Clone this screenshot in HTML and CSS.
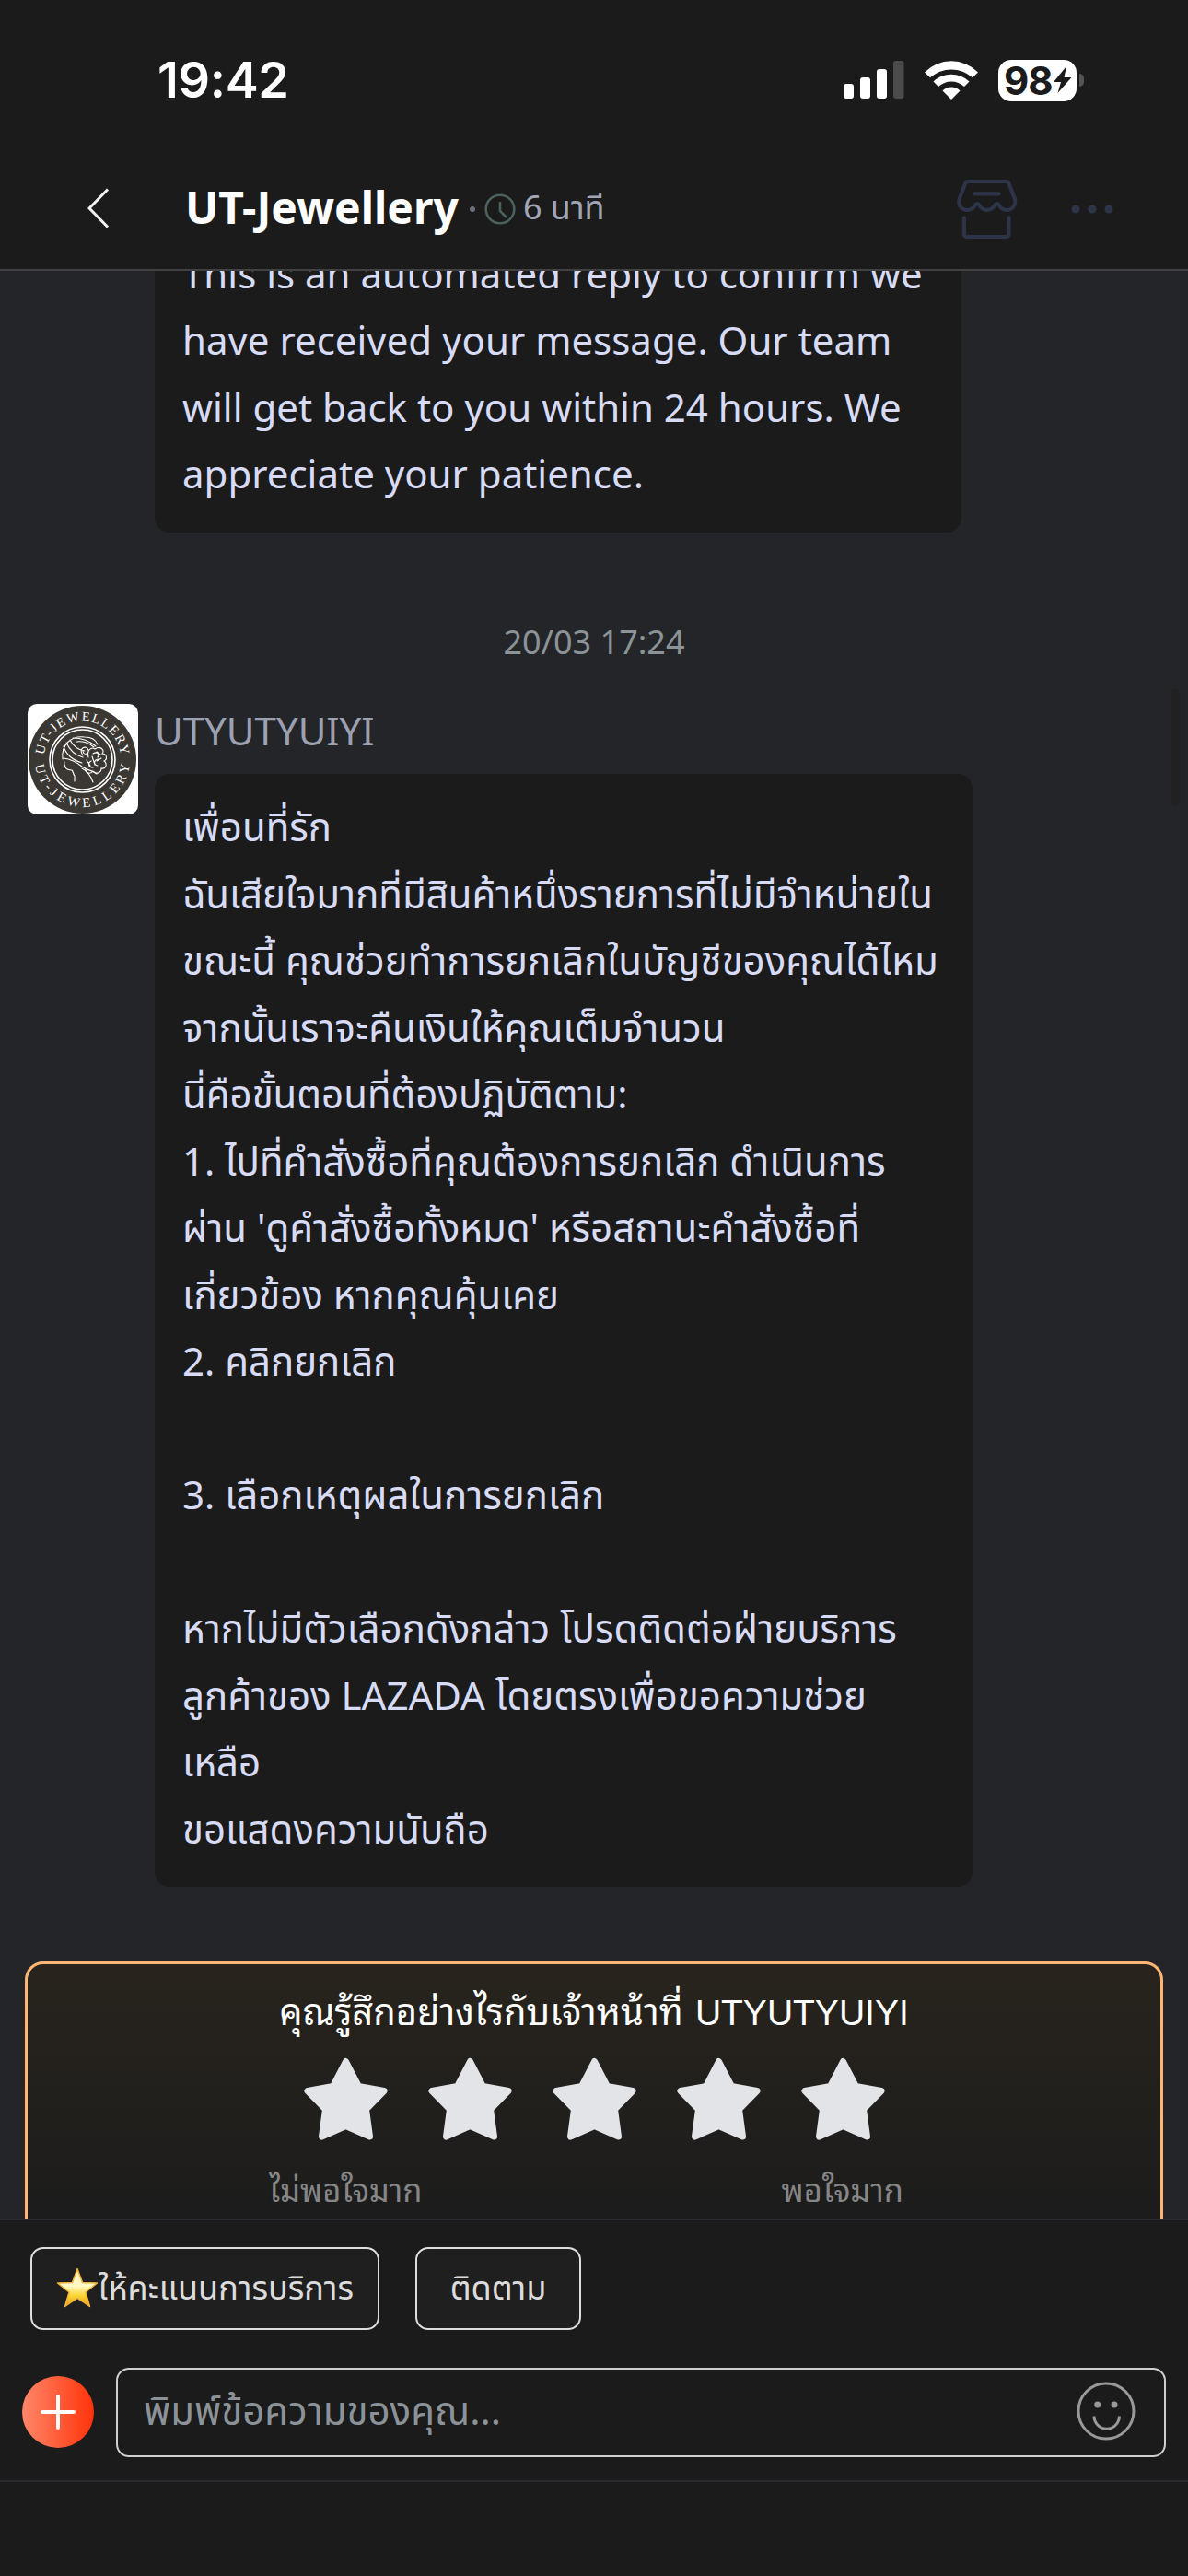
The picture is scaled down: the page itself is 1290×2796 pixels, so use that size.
FILE: index.html
```
<!DOCTYPE html>
<html lang="th">
<head>
<meta charset="utf-8">
<title>UT-Jewellery</title>
<link rel="stylesheet" href="styles.css">
</head>
<body>
<div class="phone">
  <div class="status-bar">
    <span class="clock">19:42</span>
    <div class="status-icons">
      <svg class="signal" viewBox="0 0 66 42"><g fill="#fff"><rect x="0" y="25" width="11" height="16" rx="3"/><rect x="18" y="18" width="11" height="23" rx="3"/><rect x="36" y="9" width="11" height="32" rx="3"/></g><rect x="54" y="0" width="11.5" height="41" rx="3" fill="#4b4b4b"/></svg>
      <svg class="wifi" viewBox="0 0 58 42" fill="#fff"><path d="M0 12.6A40.5 40.5 0 0 1 58 12.6L52 18.2A34.7 34.7 0 0 0 6 18.2Z"/><path d="M9.5 22.4A28.5 28.5 0 0 1 48.5 22.4L43 28A20.5 20.5 0 0 0 15 28Z"/><path d="M19.5 32.5A13.5 13.5 0 0 1 38.5 32.5L29 42Z"/></svg>
      <div class="battery">
        <span class="level">98</span>
        <svg class="bolt" viewBox="0 0 20 30"><path d="M14 0 0 17H8L4.5 29 19.5 12H11.5Z" fill="#1b1b1b"/></svg>
      </div>
      <div class="battery-tip"></div>
    </div>
  </div>

  <header class="header">
    <svg class="back" viewBox="0 0 24 44"><path d="M22 1.5 2 22 22 42.5" fill="none" stroke="#f2f2f2" stroke-width="3"/></svg>
    <h1 class="shop-name">UT-Jewellery</h1>
    <span class="dot"></span>
    <svg class="reply-clock" viewBox="0 0 34 34" fill="none" stroke="#4a615e" stroke-width="2.6"><circle cx="17" cy="17" r="15.3"/><path d="M17 9v10l7 7"/></svg>
    <span class="reply-time">6 นาที</span>
    <svg class="store" viewBox="50 40 206 204" fill="none" stroke="#2e3448" stroke-width="12.5" stroke-linecap="round"><path d="M90 52H217q6 0 8 6l18 47c8 20-5 40-26 40-14 0-20-8-25-17q-6-8-12 0c-5 9-13 17-27 17s-20-8-25-17q-6-8-12 0c-5 9-13 17-25 17-23 0-34-20-26-40l18-47q2-6 8-6zM113 92H193M79 170V222q0 10 10 10H215q10 0 10-10V170"/></svg>
    <svg class="more" viewBox="0 0 46 10" fill="#2e3448"><circle cx="5" cy="5" r="4.5"/><circle cx="23" cy="5" r="4.5"/><circle cx="41" cy="5" r="4.5"/></svg>
  </header>

  <main class="chat">
    <div class="bubble bubble-reply">
      <p>This is an automated reply to confirm we</p>
      <p>have received your message. Our team</p>
      <p>will get back to you within 24 hours. We</p>
      <p>appreciate your patience.</p>
    </div>
    <div class="date">20/03 17:24</div>
    <div class="message">
      <svg class="avatar" viewBox="0 0 120 120">
        <rect width="120" height="120" fill="#fff"/>
        <circle cx="59.5" cy="60.5" r="58.5" fill="#3b3833"/>
        <circle cx="59.5" cy="60.5" r="35.5" fill="none" stroke="#fff" stroke-width="1.6"/>
        <circle cx="59.5" cy="60.5" r="32.5" fill="none" stroke="#fff" stroke-width="1.6"/>
        <path id="ringTop" d="M17.5 60.5A42 42 0 0 1 101.5 60.5" fill="none"/>
        <path id="ringBottom" d="M8 60.5A51.5 51.5 0 0 0 111 60.5" fill="none"/>
        <text class="ring-text"><textPath href="#ringTop" startOffset="5" textLength="122">UT-JEWELLERY</textPath></text>
        <text class="ring-text"><textPath href="#ringBottom" startOffset="6" textLength="150">UT-JEWELLERY</textPath></text>
        <g fill="none" stroke="#fff" stroke-width="1.1" stroke-linecap="round">
          <path d="M38 60C36 44 48 34 62 36c7 0 12 3 14 8M39 59c8 1 14 4 20 9 7 5 12 4 16 8M39 46c3 10 10 15 20 18M42 42c4 9 10 14 18 16M46 39c4 8 9 11 16 12M49 37c8 0 18 3 25 9M53 41c6-1 14 1 19 6"/>
          <path d="M60 56c-6-8 4-12 6-6 1 5-6 6-6 1M66 58c-2-7 3-12 7-9M73 49c6-4 11 1 8 5 5 0 6 6 2 8 4 3 2 9-3 8 0 5-6 7-9 3-3 4-9 2-8-3M71 54c5-3 8 1 5 4M77 60c-5 0-6 6-1 7M69 62c-4 2-3 7 2 7M64 61l4 6M70 57l3 9M75 52l4 3M80 59l-5 3"/>
          <path d="M40 63c-1 3 1 4 1 6 2 3 5 3 7 3 2 2 1 4 3 6v6M59 70c6 3 10 9 12 15"/>
        </g>
      </svg>
      <div class="message-body">
        <div class="sender">UTYUTYUIYI</div>
        <div class="bubble bubble-steps">
          <p>เพื่อนที่รัก</p>
          <p>ฉันเสียใจมากที่มีสินค้าหนึ่งรายการที่ไม่มีจำหน่ายใน</p>
          <p>ขณะนี้ คุณช่วยทำการยกเลิกในบัญชีของคุณได้ไหม</p>
          <p>จากนั้นเราจะคืนเงินให้คุณเต็มจำนวน</p>
          <p>นี่คือขั้นตอนที่ต้องปฏิบัติตาม:</p>
          <p>1. ไปที่คำสั่งซื้อที่คุณต้องการยกเลิก ดำเนินการ</p>
          <p>ผ่าน 'ดูคำสั่งซื้อทั้งหมด' หรือสถานะคำสั่งซื้อที่</p>
          <p>เกี่ยวข้อง หากคุณคุ้นเคย</p>
          <p>2. คลิกยกเลิก</p>
          <p></p>
          <p>3. เลือกเหตุผลในการยกเลิก</p>
          <p></p>
          <p>หากไม่มีตัวเลือกดังกล่าว โปรดติดต่อฝ่ายบริการ</p>
          <p>ลูกค้าของ LAZADA โดยตรงเพื่อขอความช่วย</p>
          <p>เหลือ</p>
          <p>ขอแสดงความนับถือ</p>
        </div>
      </div>
    </div>
    <section class="rating">
      <h2 class="rating-title"><span class="question">คุณรู้สึกอย่างไรกับเจ้าหน้าที่</span> <span class="agent">UTYUTYUIYI</span></h2>
      <div class="stars">
        <svg viewBox="0 0 91 90"><use href="#star"/></svg>
        <svg viewBox="0 0 91 90"><use href="#star"/></svg>
        <svg viewBox="0 0 91 90"><path id="star" d="M45.5 4.5 59.5 31.5 87 36.5 67.5 56.5 71.5 86 45.5 74.5 19.5 86 23.5 56.5 4 36.5 31.5 31.5Z"/></svg>
        <svg viewBox="0 0 91 90"><use href="#star"/></svg>
        <svg viewBox="0 0 91 90"><use href="#star"/></svg>
      </div>
      <div class="rating-labels"><span>ไม่พอใจมาก</span><span>พอใจมาก</span></div>
    </section>
    <div class="scrollbar"></div>
  </main>

  <footer class="composer">
    <div class="quick-replies">
      <button class="chip chip-rate">
        <svg class="gold-star" viewBox="0 0 46 44"><defs><linearGradient id="gold" x1="0" y1="0" x2="0" y2="1"><stop offset="0" stop-color="#ffe9b0"/><stop offset=".45" stop-color="#fffbc8"/><stop offset=".7" stop-color="#fbd735"/><stop offset="1" stop-color="#e89a1c"/></linearGradient></defs><path d="M23 1.5 28.5 16.5 44.5 17 32 27 36.5 42.5 23 33.5 9.5 42.5 14 27 1.5 17 17.5 16.5Z" fill="url(#gold)" stroke="#f0b23a" stroke-width="1.5" stroke-linejoin="round"/></svg>
        <span>ให้คะแนนการบริการ</span>
      </button>
      <button class="chip chip-follow"><span>ติดตาม</span></button>
    </div>
    <div class="input-row">
      <div class="add"><svg viewBox="0 0 38 38"><path d="M19 2V36M2 19H36" stroke="#fff" stroke-width="4" stroke-linecap="round"/></svg></div>
      <div class="input">
        <span class="placeholder">พิมพ์ข้อความของคุณ...</span>
        <svg class="smile" viewBox="0 0 64 64" fill="none" stroke="#999" stroke-width="3"><circle cx="32" cy="32" r="30"/><circle cx="22.7" cy="25" r="3.5" fill="#999" stroke="none"/><circle cx="41" cy="25" r="3.5" fill="#999" stroke="none"/><path d="M19 37.5a13.7 13.7 0 0 0 27.4 0"/></svg>
      </div>
    </div>
  </footer>
</div>
</body>
</html>
```
FILE: styles.css
```
* { box-sizing: border-box; margin: 0; padding: 0; }
body { background: #1b1b1b; font-family: "Noto Sans", "Noto Sans Thai", sans-serif; }
svg { display: block; flex: none; }

.phone { width: 1290px; height: 2796px; display: flex; flex-direction: column; overflow: hidden; background: #1b1b1b; }

/* Status bar */
.status-bar { height: 156px; flex: none; display: flex; align-items: center; justify-content: space-between; padding: 18px 113px 0 171px; }
.clock { font: 600 54px/60px Inter, sans-serif; color: #fff; letter-spacing: -.3px; }
.status-icons { display: flex; align-items: center; }
.signal { width: 66px; height: 42px; margin-right: 22px; }
.wifi { width: 58px; height: 42px; margin-right: 22px; }
.battery { width: 85px; height: 45px; border-radius: 14px; background: #fff; display: flex; align-items: center; padding-left: 6px; }
.level { font: 700 42px/45px Inter, sans-serif; color: #1b1b1b; letter-spacing: -1px; }
.bolt { width: 20px; height: 30px; margin-left: 1px; }
.battery-tip { width: 5px; height: 14px; margin-left: 3px; border-radius: 0 5px 5px 0; background: #555; }

/* Header */
.header { height: 138px; flex: none; display: flex; align-items: center; padding: 6px 81px 0 95px; border-bottom: 2px solid #414141; }
.back { width: 24px; height: 44px; margin-top: -2px; }
.shop-name { margin: -4px 0 0 82px; font-size: 48px; line-height: 60px; font-weight: 700; color: #fff; }
.dot { width: 6px; height: 6px; margin-left: 12px; border-radius: 3px; background: #6b6e7d; }
.reply-clock { width: 34px; height: 34px; margin-left: 10px; }
.reply-time { margin: -4px 0 0 8px; font-size: 36px; line-height: 50px; color: #a1a6b7; }
.store { width: 69px; height: 68px; margin-left: auto; }
.more { width: 46px; height: 10px; margin-left: 57px; }

/* Chat */
.chat { position: relative; flex: 1; min-height: 0; overflow: hidden; display: flex; flex-direction: column; align-items: flex-start; background: #242529; }
.chat > * { flex: none; }
.bubble { border-radius: 16px; background: #1b1b1b; color: #d7dbf6; font-size: 42px; line-height: 72.5px; white-space: nowrap; padding: 21.5px 0 27px 30px; }
.bubble p { height: 72.5px; }
.bubble-reply { width: 876px; margin: -55px 0 0 168px; }
.date { align-self: center; margin-top: 99px; font-size: 36px; line-height: 40px; color: #8b9396; }
.message { display: flex; align-items: flex-start; gap: 18px; margin: 47px 0 0 30px; }
.avatar { width: 120px; height: 120px; border-radius: 10px; }
.ring-text { font: 14.5px "Liberation Serif", serif; fill: #fff; }
.sender { margin-top: 4px; font-size: 42px; line-height: 50px; color: #9ca1b2; }
.bubble-steps { width: 888px; margin-top: 22px; }

.rating { width: 1236px; height: 420px; margin: 81px 0 0 27px; border: 3px solid #ffb675; border-radius: 20px; background: linear-gradient(#28241d, #1c1c1c 270px); }
.rating-title { margin-top: 23px; text-align: center; font-size: 39px; line-height: 50px; font-weight: 400; color: #fff; white-space: nowrap; }
.rating-title .question { font-family: "Noto Sans Thai Looped", "Noto Sans", sans-serif; font-size: 39.8px; }
.rating-title .agent { font-family: "Liberation Sans", sans-serif; margin-left: 3px; }
.stars { display: flex; justify-content: center; gap: 44px; margin-top: 23px; }
.stars svg { width: 91px; height: 90px; fill: #e3e4e8; stroke: #e3e4e8; stroke-width: 7px; stroke-linejoin: round; }
.rating-labels { display: flex; justify-content: space-between; margin-top: 27px; padding: 0 279px 0 262px; font: 34.4px/50px "Noto Sans Thai Looped", "Noto Sans", sans-serif; color: #868686; }
.scrollbar { position: absolute; right: 9px; top: 454px; width: 9px; height: 127px; border-radius: 5px; background: #212122; }

/* Composer */
.composer { height: 388px; flex: none; border-top: 2px solid #2b2c30; }
.quick-replies { display: flex; gap: 39px; padding: 29px 0 0 33px; }
.chip { height: 90px; border: 2px solid #dedede; border-radius: 14px; background: #1f1f1f; color: #dcdcdc; font: 36px/50px "Noto Sans", "Noto Sans Thai", sans-serif; display: flex; align-items: center; white-space: nowrap; padding-bottom: 2px; }
.chip-rate { width: 379px; padding-left: 26px; }
.gold-star { width: 46px; height: 44px; }
.chip-follow { width: 180px; justify-content: center; }
.input-row { height: 165px; display: flex; align-items: flex-start; gap: 24px; padding: 41px 24px 0; border-bottom: 2px solid #292a2d; }
.add { width: 78px; height: 78px; flex: none; margin-top: 9px; border-radius: 50%; background: linear-gradient(90deg, #ff8769, #ff330a); display: flex; align-items: center; justify-content: center; }
.add svg { width: 38px; height: 38px; }
.input { flex: 1; height: 97px; border: 2px solid #cfcfcf; border-radius: 14px; display: flex; align-items: center; justify-content: space-between; padding: 0 31px 3px 28px; }
.placeholder { margin-top: -3px; font-size: 42px; line-height: 60px; color: #8b9399; }
.smile { width: 64px; height: 64px; }
```
